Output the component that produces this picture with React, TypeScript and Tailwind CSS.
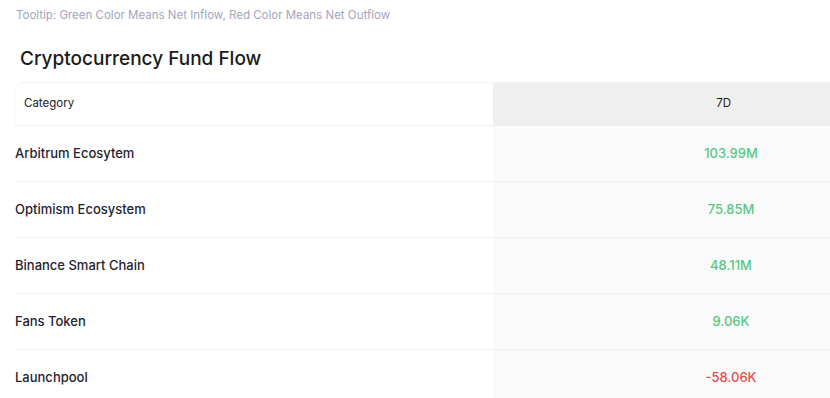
const rows = [
  { name: "Arbitrum Ecosytem", value: "103.99M", up: true },
  { name: "Optimism Ecosystem", value: "75.85M", up: true },
  { name: "Binance Smart Chain", value: "48.11M", up: true },
  { name: "Fans Token", value: "9.06K", up: true },
  { name: "Launchpool", value: "-58.06K", up: false },
];

export default function App() {
  return (
    <div className="w-[830px] h-[398px] overflow-hidden bg-white font-['Inter',sans-serif]">
      {/* Tooltip */}
      <p className="pl-4 pt-[8px] text-[11.5px] leading-[15px] text-[#a3a6ba]">
        Tooltip: Green Color Means Net Inflow, Red Color Means Net Outflow
      </p>

      {/* Title */}
      <h2 className="pl-5 pt-[24px] text-[19px] leading-[24px] font-medium text-[#1b1b1b]">
        Cryptocurrency Fund Flow
      </h2>

      {/* Table */}
      <div className="ml-[15px] mt-[11px] w-[954px]">
        <div className="flex h-[44px] rounded-tl-lg border-t border-l border-b border-t-[#f3f3f3] border-b-[#f0f0f0] border-l-[#fafafa]">
          <div className="w-[477px] flex items-center pl-2 text-[11.5px] text-[#222]">Category</div>
          <div className="w-[477px] flex items-center justify-center pr-[14px] bg-[#efefef] text-[11.5px] text-[#222]">
            7D
          </div>
        </div>
        {rows.map((r) => (
          <div key={r.name} className="flex h-[56px] border-b border-[#f0f0f0]">
            <div className="w-[478px] flex items-center text-[13px] font-medium text-[#1f2430]">
              {r.name}
            </div>
            <div
              className={
                "w-[476px] flex items-center justify-center bg-[#fafafa] text-[13px] font-medium " +
                (r.up ? "text-[#58c785]" : "text-[#e54c4c]")
              }
            >
              {r.value}
            </div>
          </div>
        ))}
      </div>
    </div>
  );
}
